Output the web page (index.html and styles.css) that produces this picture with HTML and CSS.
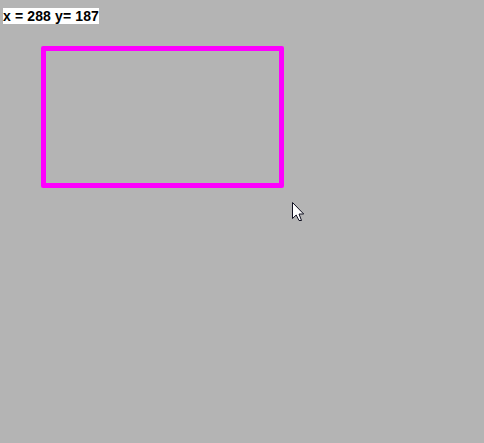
FILE: index.html
```html
<!DOCTYPE html>
<html lang="en">
<head>
<meta charset="utf-8">
<title>Canvas</title>
<link rel="stylesheet" href="styles.css">
</head>
<body>
<main class="canvas">
<div class="coords">x = 288 y= 187</div>
<div class="shape"></div>
<svg class="cursor" width="13" height="20" viewBox="0 0 13 20"><path d="M.5 .5V16.5L4.2 13L7 18.5H9.5L7 12H11.7Z" fill="#fff" stroke="#101020"/></svg>
</main>
</body>
</html>
```

FILE: styles.css
```css
body { margin: 0; background: #b4b4b4; }
.canvas { position: relative; width: 484px; height: 443px; overflow: hidden; background: #b4b4b4; }
.coords { position: absolute; left: 3px; top: 8px; width: 96px; height: 16px; background: #fff; color: #000; font: bold 14px/16px "Liberation Sans", Arial, sans-serif; letter-spacing: 0.13px; white-space: nowrap; }
.shape { position: absolute; left: 41px; top: 46px; width: 243px; height: 142px; box-sizing: border-box; border: 5px solid #f0f; border-radius: 2px; }
.cursor { position: absolute; left: 292px; top: 202px; }
```
